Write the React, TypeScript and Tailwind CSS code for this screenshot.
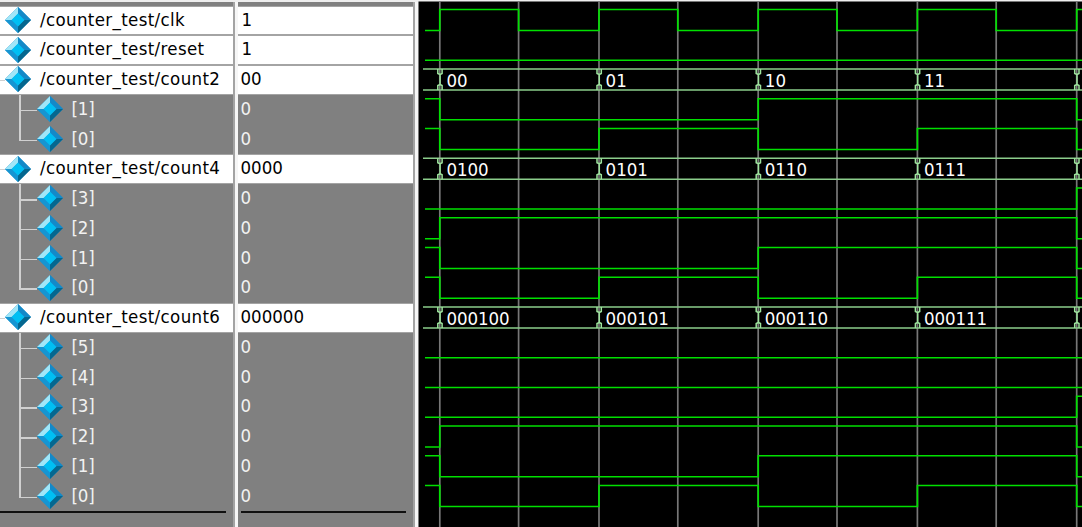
type Signal = {
  name: string;
  value: string;
  // first sample, four periods, last sample
  wave?: string;
  clock?: boolean;
  bus?: string[];
  child?: boolean;
  last?: boolean;
};

const ROW = 29.75;
const EDGES = [439.8, 599, 758.2, 917.4, 1076.7];
const HALF = 78.8;

const signals: Signal[] = [
  { name: "/counter_test/clk", value: "1", clock: true },
  { name: "/counter_test/reset", value: "1", wave: "000000" },
  { name: "/counter_test/count2", value: "00", bus: ["00", "01", "10", "11"] },
  { name: "[1]", value: "0", wave: "100110", child: true },
  { name: "[0]", value: "0", wave: "101010", child: true, last: true },
  { name: "/counter_test/count4", value: "0000", bus: ["0100", "0101", "0110", "0111"] },
  { name: "[3]", value: "0", wave: "000001", child: true },
  { name: "[2]", value: "0", wave: "011110", child: true },
  { name: "[1]", value: "0", wave: "100110", child: true },
  { name: "[0]", value: "0", wave: "101010", child: true, last: true },
  { name: "/counter_test/count6", value: "000000", bus: ["000100", "000101", "000110", "000111"] },
  { name: "[5]", value: "0", wave: "000000", child: true },
  { name: "[4]", value: "0", wave: "000000", child: true },
  { name: "[3]", value: "0", wave: "000001", child: true },
  { name: "[2]", value: "0", wave: "011110", child: true },
  { name: "[1]", value: "0", wave: "100110", child: true },
  { name: "[0]", value: "0", wave: "101010", child: true, last: true },
];

function Gem() {
  return (
    <svg className="relative -top-[0.5px] block h-[26px] w-[26px] shrink-0" viewBox="0 0 26 26">
      <path d="M13 0 26 13 13 26 0 13Z" fill="#168bc8" />
      <path d="M13 0V7L7 13H0Z" fill="#a0e6f8" />
      <path d="M13 0 26 13H19L13 7Z" fill="#1489c8" />
      <path d="M0 13H7L13 19V26Z" fill="#1695d2" />
      <path d="M26 13 13 26V19L19 13Z" fill="#05678f" />
      <path d="M13 6.5 19.5 13 13 19.5 6.5 13Z" fill="#00bff3" />
    </svg>
  );
}

function rowTone(s: Signal) {
  return s.child
    ? "bg-[#808080] text-[#f2f2f2]"
    : "bg-white text-black border-y border-[#a4a4a4]";
}

function NameRow({ s }: { s: Signal }) {
  return (
    <div className={`relative flex h-[29.75px] shrink-0 items-center ${rowTone(s)} ${s.child ? "pl-[36.5px]" : "pl-[5px]"}`}>
      {s.bus && <span className="absolute left-0 top-[14px] h-px w-[5px] bg-[#d0d0d0]" />}
      {s.child && (
        <>
          <span className={`absolute left-[19px] top-0 w-[1.5px] bg-[#d0d0d0] ${s.last ? "h-[16px]" : "h-[30px]"}`} />
          <span className="absolute left-[19px] top-[15px] h-[1.5px] w-[18px] bg-[#d0d0d0]" />
        </>
      )}
      <Gem />
      <span className={`relative -top-[0.5px] whitespace-pre pl-[9px] leading-none ${s.child ? "" : "tracking-[0.36px]"}`}>{s.name}</span>
    </div>
  );
}

function ValueRow({ s }: { s: Signal }) {
  return (
    <div className={`flex h-[29.75px] shrink-0 items-center ${rowTone(s)} ${s.value === "1" ? "pl-[4px]" : "pl-[3px]"}`}>
      <span className="relative -top-[0.5px] leading-none tracking-[0px]">{s.value}</span>
    </div>
  );
}

function wavePath(s: Signal, row: number) {
  const hi = 9.5 + row * ROW;
  const lo = hi + 21;
  if (s.clock) {
    return `M425 ${lo}` + EDGES.map((x, i) => `H${x}V${hi}` + (i < 4 ? `H${x + HALF}V${lo}` : "H1082")).join("");
  }
  const y = (c: string) => (c === "1" ? hi : lo);
  const w = s.wave!;
  return `M425 ${y(w[0])}` + EDGES.map((x, i) => `H${x}V${y(w[i + 1])}`).join("") + "H1082";
}

function Bus({ s, row }: { s: Signal; row: number }) {
  const t = 9.5 + row * ROW;
  const b = t + 21;
  return (
    <g>
      <path d={`M423 ${t}H1082M423 ${b}H1082`} stroke="#8bcd8b" strokeWidth="1.7" />
      {EDGES.map((x) => (
        <path
          key={x}
          d={`M${x - 2} ${t}v4.5L${x + 0.3} ${t + 5.5}V${b - 5.5}L${x - 2} ${b - 4.5}V${b}M${x + 2.3} ${t}v4.5L${x + 0.3} ${t + 5.5}M${x + 0.3} ${b - 5.5}L${x + 2.3} ${b - 4.5}V${b}`}
          stroke="#9de49d"
          strokeWidth="1.5"
        />
      ))}
      {s.bus!.map((v, i) => (
        <text key={v} x={EDGES[i] + 6.6} y={t + 17.7} fill="#fff" stroke="none" textLength={v.length * 10.5} className="text-[18.5px]">
          {v}
        </text>
      ))}
    </g>
  );
}

function Waves() {
  return (
    <svg className="block h-[527px] w-[664px] shrink-0" viewBox="418 0 664 527" fill="none">
      <rect x="418.5" y="1.5" width="664" height="526" fill="#000" />
      {EDGES.map((x, i) => (
        <path key={x} d={`M${x} 2V527${i < 4 ? `M${x + HALF} 2V527` : ""}`} stroke="#777" strokeWidth="1.7" />
      ))}
      {signals.map((s, i) =>
        s.bus ? <Bus key={i} s={s} row={i} /> : <path key={i} d={wavePath(s, i)} stroke="#00e000" strokeWidth="1.7" />,
      )}
    </svg>
  );
}

export default function App() {
  return (
    <div className="flex h-[527px] w-[1082px] overflow-hidden bg-[#eeeeee] font-['DejaVu_Sans_Condensed','DejaVu_Sans',sans-serif] text-[18.5px] tracking-[-0.2px] [font-stretch:condensed]">
      <div className="mt-[2px] flex w-[232.5px] shrink-0 flex-col bg-[#808080] pt-[3.5px]">
        {signals.map((s, i) => (
          <NameRow key={i} s={s} />
        ))}
        <div className="-mt-[0.2px] h-[2px] w-[225.5px] shrink-0 bg-[#101010]" />
      </div>
      <div className="mt-[2px] flex w-[5px] shrink-0 border-l-2 border-[#a3a3a3] bg-[#f6f6f6]" />
      <div className="mt-[2px] flex w-[175.5px] shrink-0 flex-col bg-[#808080] pt-[3.5px]">
        {signals.map((s, i) => (
          <ValueRow key={i} s={s} />
        ))}
        <div className="-mt-[0.2px] ml-[3.5px] h-[2px] w-[164.5px] shrink-0 bg-[#101010]" />
      </div>
      <div className="mt-[2px] w-[5px] shrink-0 border-l-2 border-[#a3a3a3] bg-[#f6f6f6]" />
      <Waves />
    </div>
  );
}
